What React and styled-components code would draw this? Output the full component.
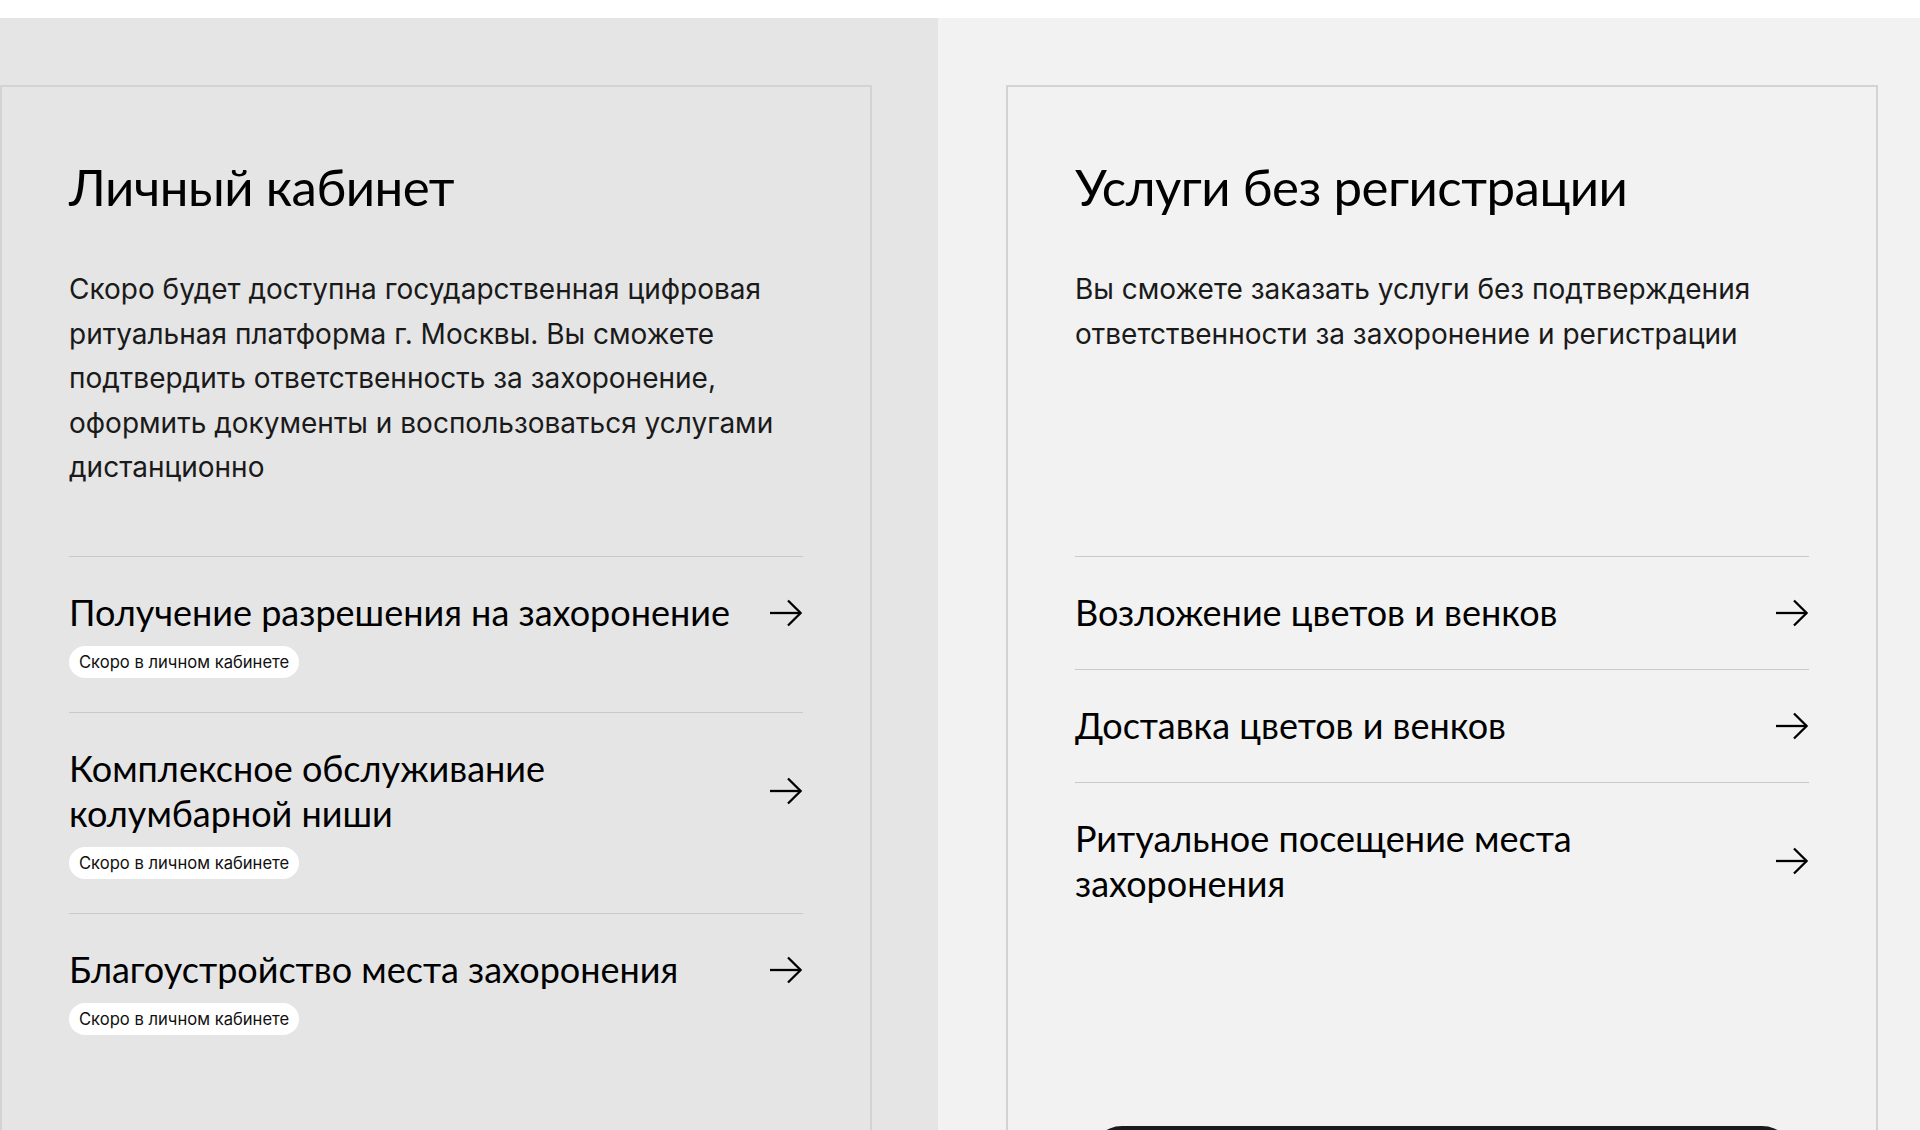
import React from "react";
import styled, { createGlobalStyle } from "styled-components";

const Global = createGlobalStyle`
  html, body { margin: 0; padding: 0; }
  body {
    background: #ffffff;
    overflow: hidden;
    font-family: Inter, "Noto Sans", sans-serif;
    -webkit-font-smoothing: antialiased;
  }
`;

const Page = styled.div`
  padding-top: 18px;
  height: 1112px;
  overflow: hidden;
`;

const Columns = styled.div`
  display: grid;
  grid-template-columns: 938px 1fr;
  height: 100%;
`;

const Column = styled.div`
  background: ${(p) => (p.$tone === "dark" ? "#e5e5e5" : "#f2f2f2")};
  padding: 67px ${(p) => p.$right}px 0 ${(p) => p.$left}px;
`;

const Card = styled.section`
  box-sizing: border-box;
  width: 872px;
  min-height: 1200px;
  border: 2px solid #d3d3d3;
  padding: 66px 67px 0 67px;
  display: flex;
  flex-direction: column;
`;

const Intro = styled.div`
  min-height: 403px;
`;

const Title = styled.h2`
  margin: 0;
  font-family: Lato, "Open Sans", sans-serif;
  font-weight: 400;
  font-size: 51px;
  line-height: 67px;
  color: #000;
  letter-spacing: -0.5px;
`;

const Lead = styled.p`
  margin: 47px 0 0;
  font-family: Inter, "Noto Sans", sans-serif;
  font-size: 28px;
  line-height: 44.5px;
  color: #1a1a1a;
  max-width: 736px;
`;

const List = styled.ul`
  list-style: none;
  margin: 0;
  padding: 0;
`;

const Item = styled.li`
  border-top: 1px solid #c9c9c9;
  padding: 33px 0 34px;
`;

const ItemHead = styled.div`
  display: flex;
  align-items: center;
  justify-content: space-between;
  gap: 24px;
`;

const ItemTitle = styled.span`
  font-family: Lato, "Open Sans", sans-serif;
  font-size: 36px;
  line-height: 45px;
  color: #000;
  max-width: 680px;
`;

const Badge = styled.span`
  display: inline-block;
  margin-top: 11px;
  background: #ffffff;
  border-radius: 16px;
  padding: 6px 10px;
  font-family: Inter, "Noto Sans", sans-serif;
  font-size: 16.6px;
  line-height: 20px;
  color: #111;
`;

const DarkButton = styled.button`
  margin: 186px 15px 0;
  height: 64px;
  border: none;
  border-radius: 32px;
  background: #1b1b1b;
`;

const Arrow = () => (
  <svg width="34" height="28" viewBox="0 0 34 28" fill="none" style={{ flexShrink: 0 }}>
    <path d="M1 14H32" stroke="#000" strokeWidth="2.3" />
    <path d="M19 1.5L31.6 14L19 26.5" stroke="#000" strokeWidth="2.3" />
  </svg>
);

const Entry = ({ title, badge }) => (
  <Item>
    <ItemHead>
      <ItemTitle>{title}</ItemTitle>
      <Arrow />
    </ItemHead>
    {badge && <Badge>Скоро в личном кабинете</Badge>}
  </Item>
);

export default function App() {
  return (
    <>
      <Global />
      <Page>
        <Columns>
          <Column $tone="dark" $left={0} $right={66}>
            <Card>
              <Intro>
                <Title>Личный кабинет</Title>
                <Lead>
                  Скоро будет доступна государственная цифровая ритуальная платформа г. Москвы. Вы
                  сможете подтвердить ответственность за захоронение, оформить документы и
                  воспользоваться услугами дистанционно
                </Lead>
              </Intro>
              <List>
                <Entry title="Получение разрешения на захоронение" badge />
                <Entry title="Комплексное обслуживание колумбарной ниши" badge />
                <Entry title="Благоустройство места захоронения" badge />
              </List>
            </Card>
          </Column>
          <Column $tone="light" $left={68} $right={42}>
            <Card>
              <Intro>
                <Title>Услуги без регистрации</Title>
                <Lead>
                  Вы сможете заказать услуги без подтверждения ответственности за захоронение и
                  регистрации
                </Lead>
              </Intro>
              <List>
                <Entry title="Возложение цветов и венков" />
                <Entry title="Доставка цветов и венков" />
                <Entry title="Ритуальное посещение места захоронения" />
              </List>
              <DarkButton aria-label="Заказать услугу" />
            </Card>
          </Column>
        </Columns>
      </Page>
    </>
  );
}
